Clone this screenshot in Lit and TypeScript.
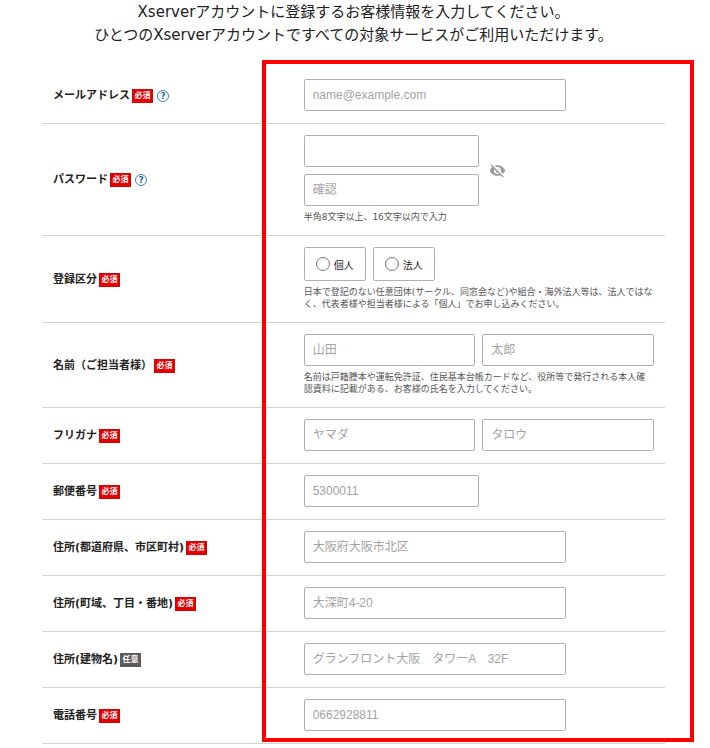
import { LitElement, html, css, nothing } from "lit";
import { customElement, property, state } from "lit/decorators.js";
import { classMap } from "lit/directives/class-map.js";

type Size = "long" | "medium" | "half";

interface Field {
  id: string;
  placeholder: string;
  size: Size;
  type?: string;
  name?: string;
}

interface Entry {
  label: string;
  fields: Field[];
  optional?: boolean;
  hint?: string;
}

const NAME_ROWS: Entry[] = [
  {
    label: "名前（ご担当者様）",
    fields: [
      { id: "family", placeholder: "山田", size: "half", name: "姓" },
      { id: "given", placeholder: "太郎", size: "half", name: "名" },
    ],
    hint: "名前は戸籍謄本や運転免許証、住民基本台帳カードなど、役所等で発行される本人確認資料に記載がある、お客様の氏名を入力してください。",
  },
  {
    label: "フリガナ",
    fields: [
      { id: "family-kana", placeholder: "ヤマダ", size: "half", name: "セイ" },
      { id: "given-kana", placeholder: "タロウ", size: "half", name: "メイ" },
    ],
  },
  { label: "郵便番号", fields: [{ id: "postal", placeholder: "5300011", size: "medium" }] },
  { label: "住所(都道府県、市区町村)", fields: [{ id: "city", placeholder: "大阪府大阪市北区", size: "long" }] },
  { label: "住所(町域、丁目・番地)", fields: [{ id: "street", placeholder: "大深町4-20", size: "long" }] },
  {
    label: "住所(建物名)",
    optional: true,
    fields: [{ id: "building", placeholder: "グランフロント大阪　タワーA　32F", size: "long" }],
  },
  { label: "電話番号", fields: [{ id: "phone", placeholder: "0662928811", size: "long", type: "tel" }] },
];

@customElement("form-row")
export class FormRow extends LitElement {
  @property() label = "";
  @property({ type: Boolean }) optional = false;
  @property({ type: Boolean }) help = false;

  static styles = css`
    :host {
      display: grid;
      grid-template-columns: 42% minmax(0, 1fr);
      align-items: center;
      padding: 11px 0 12px;
      border-bottom: 1px solid #d2d2d2;
    }
    .head {
      display: flex;
      align-items: center;
      gap: 2px;
      padding: 2px 0 0 11px;
      font-size: 11px;
      line-height: 16px;
      font-weight: 700;
    }
    .control {
      padding-right: 11px;
    }
    .badge {
      display: flex;
      align-items: center;
      justify-content: center;
      width: 21px;
      height: 14px;
      background: #e00000;
      color: #fff;
      font-size: 8px;
      line-height: 14px;
    }
    .badge.optional {
      background: #5c5c5c;
    }
    .help {
      display: flex;
      align-items: center;
      justify-content: center;
      box-sizing: border-box;
      width: 12px;
      height: 12px;
      margin-left: 2px;
      border: 1px solid #3f7fbf;
      border-radius: 50%;
      color: #1f66b0;
      font-size: 9px;
      line-height: 10px;
      text-decoration: none;
    }
  `;

  render() {
    return html`
      <div class="head">
        <span>${this.label}</span>
        <span class=${classMap({ badge: true, optional: this.optional })}>${this.optional ? "任意" : "必須"}</span>
        ${this.help ? html`<a class="help" href="#help" aria-label="${this.label}のヘルプ">?</a>` : nothing}
      </div>
      <div class="control"><slot></slot></div>
    `;
  }
}

@customElement("app-root")
export class AppRoot extends LitElement {
  @state() private revealed = false;

  static styles = css`
    :host {
      display: block;
      padding: 1px 45px 0 42px;
      background: #fff;
      color: #222;
      font-family: "DejaVu Sans", "Noto Sans CJK JP", sans-serif;
    }
    .lead {
      margin: 0 0 21px;
      font-size: 15px;
      line-height: 23px;
      text-align: center;
    }
    .form {
      position: relative;
    }
    .frame {
      position: absolute;
      top: -8px;
      right: -29px;
      bottom: 2px;
      left: calc(42% - 42px);
      border: 4px solid #f00;
      pointer-events: none;
    }
    .fields {
      display: flex;
      gap: 7px;
    }
    .input {
      box-sizing: border-box;
      width: 100%;
      height: 32px;
      min-width: 0;
      margin: 0;
      padding: 0 8px;
      border: 1px solid #b0b0b0;
      border-radius: 2px;
      background: #fff;
      color: #222;
      font-family: "Liberation Sans", "Noto Sans CJK JP", sans-serif;
      font-size: 12px;
    }
    .input::placeholder {
      color: #a3a3a3;
      opacity: 1;
    }
    .long {
      width: 75%;
    }
    .medium {
      width: 50%;
    }
    .password {
      display: flex;
      align-items: center;
      gap: 10px;
    }
    .pair {
      display: flex;
      flex-direction: column;
      gap: 7px;
      width: 50%;
    }
    .eye {
      display: flex;
      padding: 0;
      border: 0;
      background: none;
      color: #999;
    }
    .hint {
      margin: 5px 0 0;
      color: #555;
      font-size: 9px;
      line-height: 12px;
    }
    .choice {
      display: flex;
      align-items: center;
      gap: 4px;
      box-sizing: border-box;
      height: 34px;
      padding: 0 11px;
      border: 1px solid #b0b0b0;
      border-radius: 2px;
      font-size: 10px;
    }
    .radio {
      appearance: none;
      box-sizing: border-box;
      width: 14px;
      height: 14px;
      margin: 0;
      border: 1px solid #777;
      border-radius: 50%;
    }
    .radio:checked {
      border: 4px solid #1f66b0;
    }
  `;

  private field(f: Field, label: string) {
    return html`<input
      class="input ${f.size}"
      id=${f.id}
      name=${f.id}
      type=${f.type ?? "text"}
      placeholder=${f.placeholder}
      aria-label=${f.name ?? label}
    />`;
  }

  private row(e: Entry) {
    return html`
      <form-row .label=${e.label} .optional=${e.optional ?? false}>
        <div class="fields">${e.fields.map((f) => this.field(f, e.label))}</div>
        ${e.hint ? html`<p class="hint">${e.hint}</p>` : nothing}
      </form-row>
    `;
  }

  render() {
    const type = this.revealed ? "text" : "password";
    return html`
      <p class="lead" lang="ja">
        Xserverアカウントに登録するお客様情報を入力してください。<br />ひとつのXserverアカウントですべての対象サービスがご利用いただけます。
      </p>
      <form class="form" lang="ja">
        <form-row label="メールアドレス" help>
          <div class="fields">
            ${this.field({ id: "email", placeholder: "name@example.com", size: "long", type: "email" }, "メールアドレス")}
          </div>
        </form-row>
        <form-row label="パスワード" help>
          <div class="password">
            <div class="pair">
              <input class="input" type=${type} name="password" aria-label="パスワード" />
              <input class="input" type=${type} name="confirm" placeholder="確認" aria-label="パスワード確認" />
            </div>
            <button
              class="eye"
              type="button"
              aria-label="パスワードを表示"
              @click=${() => (this.revealed = !this.revealed)}
            >
              <svg width="17" height="17" viewBox="0 0 24 24" fill="currentColor" aria-hidden="true">
                <path
                  d="M12 7c2.76 0 5 2.24 5 5 0 .65-.13 1.26-.36 1.83l2.92 2.92c1.51-1.26 2.7-2.89 3.43-4.75-1.73-4.39-6-7.5-11-7.5-1.4 0-2.74.25-3.98.7l2.16 2.16C10.74 7.13 11.35 7 12 7zM2 4.27l2.28 2.28.46.46C3.08 8.3 1.78 10.02 1 12c1.73 4.39 6 7.5 11 7.5 1.55 0 3.03-.3 4.38-.84l.42.42L19.73 22 21 20.73 3.27 3 2 4.27zM7.53 9.8l1.55 1.55c-.05.21-.08.43-.08.65 0 1.66 1.34 3 3 3 .22 0 .44-.03.65-.08l1.55 1.55c-.67.33-1.41.53-2.2.53-2.76 0-5-2.24-5-5 0-.79.2-1.53.53-2.2zm4.31-.78l3.15 3.15.02-.16c0-1.66-1.34-3-3-3l-.17.01z"
                />
              </svg>
            </button>
          </div>
          <p class="hint">半角8文字以上、16文字以内で入力</p>
        </form-row>
        <form-row label="登録区分">
          <div class="fields" role="radiogroup" aria-label="登録区分">
            <label class="choice"><input class="radio" type="radio" name="kind" value="person" />個人</label>
            <label class="choice"><input class="radio" type="radio" name="kind" value="company" />法人</label>
          </div>
          <p class="hint">
            日本で登記のない任意団体(サークル、同窓会など)や組合・海外法人等は、法人ではなく、代表者様や担当者様による「個人」でお申し込みください。
          </p>
        </form-row>
        ${NAME_ROWS.map((e) => this.row(e))}
        <div class="frame"></div>
      </form>
    `;
  }
}
